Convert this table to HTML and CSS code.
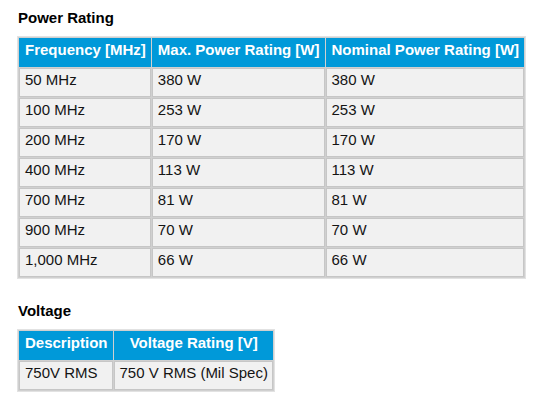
FILE: index.html
```html
<!DOCTYPE html>
<html>
<head>
<meta charset="utf-8">
<link rel="stylesheet" href="styles.css">
</head>
<body>
<div class="page">
  <h3 class="title">Power Rating</h3>
  <table class="spec">
    <thead>
      <tr><th>Frequency [MHz]</th><th>Max. Power Rating [W]</th><th>Nominal Power Rating [W]</th></tr>
    </thead>
    <tbody>
      <tr><td>50 MHz</td><td>380 W</td><td>380 W</td></tr>
      <tr><td>100 MHz</td><td>253 W</td><td>253 W</td></tr>
      <tr><td>200 MHz</td><td>170 W</td><td>170 W</td></tr>
      <tr><td>400 MHz</td><td>113 W</td><td>113 W</td></tr>
      <tr><td>700 MHz</td><td>81 W</td><td>81 W</td></tr>
      <tr><td>900 MHz</td><td>70 W</td><td>70 W</td></tr>
      <tr><td>1,000 MHz</td><td>66 W</td><td>66 W</td></tr>
    </tbody>
  </table>
  <h3 class="title second">Voltage</h3>
  <table class="spec">
    <thead>
      <tr><th>Description</th><th>Voltage Rating [V]</th></tr>
    </thead>
    <tbody>
      <tr><td>750V RMS</td><td>750 V RMS (Mil Spec)</td></tr>
    </tbody>
  </table>
</div>
</body>
</html>
```
FILE: styles.css
```css
html, body {
  margin: 0;
  padding: 0;
  background: #ffffff;
}
.page {
  padding: 9px 0 0 17px;
  font-family: "Liberation Sans", Arial, sans-serif;
  font-size: 15px;
  color: #111111;
}
.title {
  margin: 0 0 10px 1px;
  font-size: 15px;
  line-height: 17px;
  font-weight: bold;
  color: #000000;
}
.title.second {
  margin-top: 23px;
}
.spec {
  border-collapse: separate;
  border-spacing: 1px;
  background: #d0d0d0;
  border: 1px solid #e2e2e2;
}
.spec th,
.spec td {
  border: 1px solid #c6c6c6;
  padding: 2px 4px 8px 5px;
  line-height: 17px;
  font-size: 15px;
  white-space: nowrap;
}
.spec th {
  background: #0099d9;
  color: #ffffff;
  font-weight: bold;
  text-align: center;
  border-color: #0099d9;
}
.spec td {
  background: #f1f1f1;
  text-align: left;
  color: #141414;
}
```
